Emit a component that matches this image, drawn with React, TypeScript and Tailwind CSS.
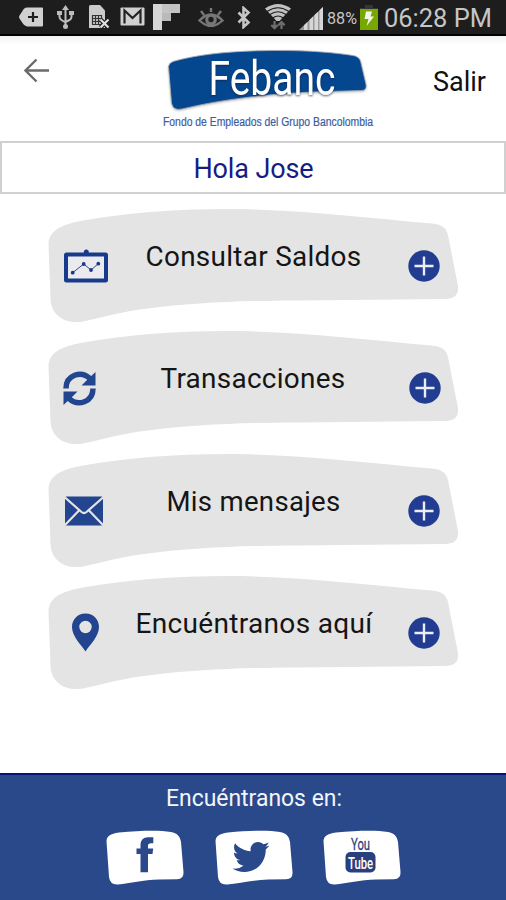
import type { ReactNode } from "react";
import { FaTwitter } from "react-icons/fa";

function StatusBar() {
  return (
    <div className="flex h-9 items-start border-b-2 border-black bg-[#1d1d1d] pl-[19px] text-[#c6c6c6]">
      {/* Tag */}
      <svg className="mt-[7px] h-5 w-6" viewBox="0 0 24 20">
        <path fill="#d0d0d0" d="M8 .5h15a1 1 0 0 1 1 1v17a1 1 0 0 1-1 1H8Q5 19 3.500 16L.5 11.500Q-.3 10 .5 8.500L3.500 4Q5 .5 8 .5Z" />
        <path stroke="#1d1d1d" strokeWidth="2.200" d="M14 5v10M9 10h10" />
      </svg>
      {/* USB */}
      <svg className="ml-[14px] mt-[5px] h-6 w-[18px]" viewBox="0 0 18 24">
        <path fill="none" stroke="#bdbdbd" strokeWidth="2" d="M8.500 3v18M2.500 8v4q0 2 2 3l4 2.500M14.500 8v4q0 2-2 3l-4 2" />
        <path fill="#bdbdbd" d="m8.500 0 3.500 5H5ZM0 6h5v4H0ZM12 6h5v4h-5Z" />
        <circle cx="8.500" cy="21.500" r="2.500" fill="#bdbdbd" />
      </svg>
      {/* SIM card */}
      <svg className="ml-[13px] mt-[5px] h-6 w-[22px]" viewBox="0 0 22 24">
        <path fill="#cbcbcb" d="M1 1.500Q1 0 2.500 0H12l5 5.500V23H1Z" />
        <path fill="none" stroke="#333" strokeWidth="1.200" d="M4.500 10.500h9v9h-9ZM4.500 13.500h9M4.500 16.500h9M7.500 10.500v9M10.500 10.500v9" />
        <path stroke="#1d1d1d" strokeWidth="4.500" d="m12.500 14.500 8 8m0-8-8 8" />
        <path stroke="#e0e0e0" strokeWidth="2.200" d="m12.500 14.500 8 8m0-8-8 8" />
      </svg>
      {/* Gmail */}
      <svg className="ml-[10px] mt-[7px] h-[19px] w-[25px]" viewBox="0 0 25 19">
        <rect x=".5" y=".5" width="24" height="18" rx="1" fill="#d0d0d0" />
        <path fill="none" stroke="#222" strokeWidth="2.200" d="M4.500 16.500V3.500l8 7.500 8-7.500v13" />
      </svg>
      {/* Flipboard */}
      <svg className="ml-[8px] mt-1 h-[26px] w-[27px]" viewBox="0 0 27 26">
        <path fill="#d6d6d6" d="M0 0h9v26H0Z" />
        <path fill="#c4c4c4" d="M9 0h18v9H9Z" />
        <path fill="#bababa" d="M9 9h9v8H9Z" />
      </svg>
      {/* Smart stay eye */}
      <svg className="ml-[18px] mt-[7px] h-5 w-[26px]" viewBox="0 0 26 20">
        <path fill="none" stroke="#777" strokeWidth="2.400" d="M1.500 13.500Q13 1.500 24.500 13.500 13 24.500 1.500 13.500ZM3 4l3 4M13 1v4M23 4l-3 4" />
        <circle cx="13" cy="13" r="5.800" fill="#777" />
        <circle cx="13" cy="12.500" r="2.700" fill="#1d1d1d" />
      </svg>
      {/* Bluetooth */}
      <svg className="ml-[13px] mt-[6px] h-[23px] w-[14px]" viewBox="0 0 14 23">
        <path fill="none" stroke="#c6c6c6" strokeWidth="2.600" d="m1.500 6.500 10 10-5 4.500V2l5 4.500-10 10" />
      </svg>
      {/* Wi-Fi with transfer arrows */}
      <svg className="ml-[14px] mt-1 h-[26px] w-[26px]" viewBox="0 0 26 26">
        <path fill="#c2c2c2" d="M0 4.500Q13-4.500 26 4.500L14.500 17h-3Z" />
        <path fill="none" stroke="#1d1d1d" strokeWidth="1.100" d="M2 7.500q11-7.500 22 0M5 10.500q8-5.500 16 0M8 13.700q5-3.500 10 0" />
        <path fill="none" stroke="#6f6f6f" strokeWidth="2.200" d="M9.500 17v7m-3.200-3 3.200 3.200 3.200-3.200M16.500 25v-7m-3.200 3.200 3.200-3.200 3.200 3.200" />
      </svg>
      {/* Signal */}
      <svg className="ml-2 mt-[7px] h-[23px] w-6" viewBox="0 0 24 23">
        <path fill="#999" d="M0 23 24 0v23Z" />
        <path fill="#d6d6d6" d="M5 18.200 8.500 15v8H5ZM10.500 13 14 9.600V23h-3.500ZM15.500 8 19 4.800V23h-3.500ZM20.500 3.300 24 0v23h-3.500Z" />
      </svg>
      <svg className="ml-[3px] h-[34px] w-8" viewBox="0 0 32 34">
        <text x="1" y="24" textLength="30" lengthAdjust="spacingAndGlyphs" className="fill-[#c6c6c6] font-['Roboto',sans-serif] text-[17px]">88%</text>
      </svg>
      {/* Battery */}
      <svg className="ml-[2px] mt-[5px] h-[25px] w-[18px]" viewBox="0 0 18 25">
        <path fill="#353535" d="M5 0h8v3h5v4H0V3h5Z" />
        <path fill="#76a800" d="M0 4h18v21H0Z" />
        <path fill="#f2f5e8" d="M6 6.500h6l-1.500 5H14L6.500 21l2-7H4.500Z" />
      </svg>
      <svg className="ml-[6px] h-[34px] w-[108px]" viewBox="0 0 108 34">
        <text x="0" y="27" textLength="108" lengthAdjust="spacingAndGlyphs" className="fill-[#c6c6c6] font-['Roboto',sans-serif] text-[25.500px]">06:28 PM</text>
      </svg>
    </div>
  );
}

function Logo() {
  return (
    <svg className="ml-[109px] mt-3 h-[90px] w-[220px]" viewBox="0 0 220 90">
      <path
        fill="#04478f"
        stroke="#a9adb5"
        strokeWidth=".8"
        className="drop-shadow-[0_1px_1px_rgba(0,0,0,0.25)]"
        d="M9.500 18.500Q10 15 14 13.500C40 6 75 2.500 120 2.500 150 2.500 175 4.500 194 7.500Q200 8.500 201.500 13L207 36.500Q208 42 203 42.500L170 43.500C110 45 60 52 23 61Q14 63 12.500 55Z"
      />
      <text x="49.500" y="47" textLength="127" lengthAdjust="spacingAndGlyphs" className="fill-white font-['Roboto',sans-serif] text-[48px] drop-shadow-[0_1px_1px_rgba(20,30,70,0.7)]">
        Febanc
      </text>
      <text x="4" y="77.500" textLength="210" lengthAdjust="spacingAndGlyphs" className="fill-[#3b5da3] stroke-[#3b5da3] stroke-[0.2px] font-['Liberation_Sans',sans-serif] text-[12px]">
        Fondo de Empleados del Grupo Bancolombia
      </text>
    </svg>
  );
}

function PlusBadge() {
  return (
    <svg className="size-8" viewBox="0 0 32 32">
      <circle cx="16" cy="16" r="15.700" fill="#213c91" />
      <path stroke="#eceef5" strokeWidth="2.400" d="M16 6.500v19M6.500 16h19" />
    </svg>
  );
}

const menuItems = [
  {
    label: "Consultar Saldos",
    labelWidth: 216,
    offset: "ml-[97px]",
    plus: "left-[360px]",
    icon: (
      <svg className="size-12" viewBox="0 0 48 48">
        <circle cx="25.300" cy="10" r="2.500" fill="#173b8b" />
        <rect x="5" y="12.500" width="40" height="26" rx=".5" fill="#ebebef" stroke="#173b8b" strokeWidth="4" />
        <path fill="none" stroke="#344b86" strokeWidth="1" d="m11.700 30.700 11-8.700 7.300 6 7.300-6.300" />
        <g fill="#173b8b">
          <circle cx="11.700" cy="30.700" r="1.900" />
          <circle cx="22.700" cy="22" r="1.900" />
          <circle cx="30" cy="28" r="1.900" />
          <circle cx="37.300" cy="21.700" r="1.900" />
        </g>
      </svg>
    ),
  },
  {
    label: "Transacciones",
    labelWidth: 185,
    offset: "ml-[112px]",
    plus: "left-[361px]",
    icon: (
      <svg className="size-12" viewBox="0 0 48 48">
        <g fill="none" stroke="#21458e" strokeWidth="5.500">
          <path d="M5 24.500C5 11 20 6 29 14.500" />
          <path d="M32 24.500C32 38 17 43 8 34.500" />
        </g>
        <path fill="#21458e" d="M34.500 8v13.500H20.500l5-5ZM2.500 41V27.500H16.500l-5 5Z" />
      </svg>
    ),
  },
  {
    label: "Mis mensajes",
    labelWidth: 174,
    offset: "ml-[118px]",
    plus: "left-[360px]",
    icon: (
      <svg className="size-12" viewBox="0 0 48 48">
        <rect x="4" y="9.500" width="38" height="29" rx="1.500" fill="#23448e" />
        <path fill="none" stroke="#e4e4e4" strokeWidth="2.200" d="m4 10.500 16.500 14.500q2.500 2 5 0L42 10.500M4 38 18 23.500M42 38 28 23.500" />
      </svg>
    ),
  },
  {
    label: "Encuéntranos aquí",
    labelWidth: 237,
    offset: "ml-[87px]",
    plus: "left-[360px]",
    icon: (
      <svg className="size-12" viewBox="0 0 48 48">
        <path fill="#23448e" fillRule="evenodd" d="M24.500 4.500C16.500 4.500 11 10.500 11 18 11 27.500 20 35.500 24.500 42.500 29 35.500 38 27.500 38 18 38 10.500 32.500 4.500 24.500 4.500Zm0 7.300a6.200 6.200 0 1 1 0 12.400 6.200 6.200 0 0 1 0-12.400Z" />
      </svg>
    ),
  },
];

function MenuCard({ item }: { item: (typeof menuItems)[number] }) {
  return (
    <button className="relative grid h-[114.300px] w-[411px] text-left">
      <svg className="col-start-1 row-start-1 h-full w-full" viewBox="0 0 411 114.300">
        <path
          fill="#e4e4e4"
          d="M.5 35C1 24 9 16 35 11.500 75 4.500 125 0 180 0 250 0 320 9 384 14.500 393 15.500 398 18 400 26L410 77Q411.500 90 397 90L250 91.500C190 92 150 93 92 100.500 65 104.500 50 109.500 35 112.500 18 115.500 3 107 2.500 90Z"
        />
      </svg>
      <span className="col-start-1 row-start-1 ml-[13px] mt-[33px]">{item.icon}</span>
      <svg className={`col-start-1 row-start-1 mt-[26px] h-10 w-[250px] ${item.offset}`} viewBox="0 0 250 40">
        <text x=".5" y="30.500" textLength={item.labelWidth} lengthAdjust="spacingAndGlyphs" className="fill-[#151515] font-['Roboto',sans-serif] text-[28.500px] tracking-[0.3px]">
          {item.label}
        </text>
      </svg>
      <span className={`absolute top-[41px] ${item.plus}`}>
        <PlusBadge />
      </span>
    </button>
  );
}

function SocialBadge({ children }: { children: ReactNode }) {
  return (
    <svg className="h-[55px] w-[78px]" viewBox="0 0 78 55">
      <path fill="#fff" d="M.5 11C1 6 4 4 13 2.500 35 .5 53 0 65 2 71 3 74 6 75 12L77.500 42Q78 49 71 49.200L53 49.500C37 50 24 53.500 12 54.500Q4 55 3 47Z" />
      {children}
    </svg>
  );
}

export default function App() {
  return (
    <div className="flex h-[900px] w-[506px] flex-col overflow-hidden bg-white font-['Roboto',sans-serif]">
      <StatusBar />

      {/* Header */}
      <header className="flex h-[105px] items-start bg-linear-to-b from-[#f1f1f1] to-white to-8%">
        <svg className="ml-6 mt-[22px] h-[25px] w-[26px]" viewBox="0 0 26 25">
          <path fill="none" stroke="#6b6b6b" strokeWidth="2.400" d="M25 12.500H2M12.500 1.500 1.500 12.500l11 11" />
        </svg>
        <Logo />
        <svg className="ml-[54px] mt-[25px] h-10 w-14" viewBox="0 0 56 40">
          <text x="0" y="29.500" textLength="53" lengthAdjust="spacingAndGlyphs" className="fill-[#111] text-[27px]">Salir</text>
        </svg>
      </header>

      <div className="flex h-[53px] items-center justify-center border-2 border-[#d0d0d0]">
        <svg className="h-10 w-[122px]" viewBox="0 0 122 40">
          <text x="1.500" y="29.500" textLength="120" className="fill-[#151d84] text-[27px]">Hola Jose</text>
        </svg>
      </div>

      {/* Menu */}
      <main className="flex flex-1 flex-col gap-2 pl-12 pt-[15px]">
        {menuItems.map((item) => (
          <MenuCard key={item.label} item={item} />
        ))}
      </main>

      {/* Footer */}
      <footer className="h-[127px] border-t-2 border-[#08107c] bg-[#2a498b]">
        <svg className="ml-[166px] mt-[7px] h-[34px] w-[180px]" viewBox="0 0 180 34">
          <text x="0" y="24" textLength="176" lengthAdjust="spacingAndGlyphs" className="fill-[#f4f5f9] text-[23px]">Encuéntranos en:</text>
        </svg>
        <div className="ml-[106px] mt-[14px] flex gap-[30.500px]">
          <SocialBadge>
            <path fill="#2a498b" d="M34.500 42.300V24H30.500V18.500h4v-3C34.500 10 37.500 7.300 42 7.300h5.300v6H45.200C42.800 13.300 42 14.300 42 16v2.500h5.200L46.500 24H42V42.300Z" />
          </SocialBadge>
          <SocialBadge>
            <FaTwitter x="17.500" y="8.500" size="37" color="#2a498b" />
          </SocialBadge>
          <SocialBadge>
            <text x="28" y="20" textLength="19" lengthAdjust="spacingAndGlyphs" className="fill-[#2a3f7d] stroke-[#2a3f7d] stroke-[0.300px] text-[17px]">You</text>
            <rect x="22.500" y="22" width="30" height="20.500" rx="5" fill="#2a3f7d" />
            <text x="25" y="38.500" textLength="25" lengthAdjust="spacingAndGlyphs" className="fill-white text-[17px] font-medium">Tube</text>
          </SocialBadge>
        </div>
      </footer>
    </div>
  );
}
